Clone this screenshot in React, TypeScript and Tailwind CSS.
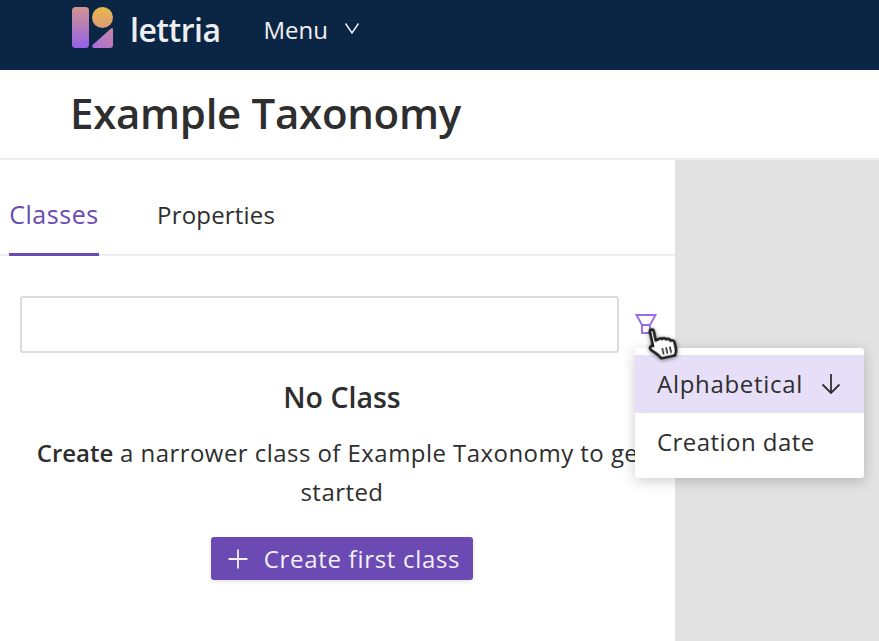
import React from "react";

const font = { fontFamily: '"Open Sans", "Noto Sans", sans-serif' };

function Logo() {
  return (
    <svg width="50" height="44" viewBox="0 0 50 44" className="mb-[4px] shrink-0">
      <defs>
        <linearGradient id="a" x1="0" y1="0" x2="0" y2="1">
          <stop offset="0" stopColor="#d2958f" />
          <stop offset="1" stopColor="#9360e8" />
        </linearGradient>
        <linearGradient id="b" x1="0" y1="0" x2="0" y2="1">
          <stop offset="0" stopColor="#e8b84a" />
          <stop offset="1" stopColor="#dc9c78" />
        </linearGradient>
        <linearGradient id="c" x1="0" y1="1" x2="1" y2="0">
          <stop offset="0" stopColor="#a66ddc" />
          <stop offset="1" stopColor="#c987a4" />
        </linearGradient>
      </defs>
      <rect x="1" y="1" width="17" height="41" rx="3.5" fill="url(#a)" />
      <circle cx="31.5" cy="11.5" r="10.5" fill="url(#b)" />
      <path d="M21.5 39 L40 22.5 Q42 21 42 23.5 V39 Q42 42 39 42 H23 Q20.5 42 21.5 39 Z" fill="url(#c)" />
    </svg>
  );
}

function Cursor() {
  return (
    <svg
      width="33"
      height="35"
      viewBox="0 0 30 32"
      className="absolute left-[646px] top-[326px] -rotate-12 drop-shadow-[0_1px_2px_rgba(0,0,0,0.45)]"
    >
      <path
        d="M6 3 C6 1 9.5 1 9.5 3 V12 L12 11.5 C13.5 10.5 15 11 15.5 12 C17 11 18.5 11.5 19 13 C20.5 12.5 22.5 13 22.5 15 C24 14.5 26 15 26 17.5 V23 C26 26 25 27 24 29 H11 L9 25.5 L3.5 19.5 C2 17.5 4 15.5 6 16.5 Z"
        fill="#fff"
        stroke="#1c1c1c"
        strokeWidth="2.4"
        strokeLinejoin="round"
      />
      <path d="M14 20 V26 M17.5 20 V26 M21 20 V26" stroke="#1c1c1c" strokeWidth="1.4" />
    </svg>
  );
}

export default function App() {
  return (
    <div className="relative flex h-[641px] w-[879px] flex-col overflow-hidden bg-white text-[#2e2e2e]" style={font}>
      <header className="flex h-[70px] shrink-0 items-center bg-[#0b2545] pb-[10px] pl-[71px]">
        <Logo />
        <span className="ml-[9px] text-[32px] font-semibold tracking-[-0.5px] text-[#eceef0]">lettria</span>
        <span className="ml-[43px] text-[24px] text-[#eef0f2]">Menu</span>
        <svg width="16" height="13" viewBox="0 0 16 13" fill="none" className="ml-[16px] mb-[3px]">
          <path d="M1.5 1.5 L8 11 L14.5 1.5" stroke="#eef0f2" strokeWidth="1.5" />
        </svg>
      </header>

      <div className="flex h-[90px] shrink-0 items-center border-b-2 border-[#eeeeee] pb-[3px] pl-[70px]">
        <h1 className="text-[42px] font-semibold leading-none tracking-[-0.3px] text-[#2e2e2e]">Example Taxonomy</h1>
      </div>

      <div className="flex min-h-0 flex-1">
        <main className="flex w-[675px] shrink-0 flex-col bg-white">
          <nav className="flex h-[96px] items-stretch border-b-2 border-[#eeeeee] pl-[9px]">
            <div className="-mb-[2px] flex w-[90px] items-center justify-center border-b-[3px] border-[#6b4bb3] pt-[17px] text-[25px] tracking-[0.55px] text-[#6b4bb3]">
              Classes
            </div>
            <div className="ml-[58px] flex items-center pt-[15px] text-[24px] tracking-[0.2px]">Properties</div>
          </nav>

          <div className="mt-[40px] flex items-center pl-[20px]">
            <input className="h-[57px] w-[599px] rounded-[3px] border-2 border-[#dcdcdc] bg-white" aria-label="Search" />
            <svg width="24" height="24" viewBox="0 0 24 24" fill="none" className="ml-[15px] mt-[1px]">
              <path d="M2.5 2 H21.5 L16 12 H8 Z" stroke="#9a6cec" strokeWidth="1.9" />
              <rect x="8" y="12" width="8" height="8" stroke="#9a6cec" strokeWidth="1.9" />
            </svg>
          </div>

          <div className="flex w-[684px] flex-col items-center">
            <h2 className="mt-[26px] text-[28.5px] font-semibold leading-[36px] text-[#2e2e2e]">No Class</h2>
            <p className="mt-[18px] w-[644px] text-center text-[24px] leading-[39px] tracking-[0.45px]">
              <span className="font-semibold tracking-normal">Create</span> a narrower class of Example Taxonomy to get started
            </p>
            <button className="mt-[26px] flex h-[43px] w-[262px] items-center justify-center gap-[16px] rounded-[3px] bg-[#6b4bb3] pl-[4px] text-[24px] tracking-[0.7px] text-[#f3f0fa] shadow-[0_2px_4px_rgba(0,0,0,0.1)]">
              <svg width="20" height="20" viewBox="0 0 20 20" fill="none">
                <path d="M10 0.5 V19.5 M0.5 10 H19.5" stroke="#f3f0fa" strokeWidth="1.8" />
              </svg>
              Create first class
            </button>
          </div>
        </main>
        <aside className="flex-1 bg-[#e2e2e2]" />
      </div>

      <div className="absolute left-[635px] top-[348px] w-[229px] overflow-hidden rounded-[3px] bg-white py-[7px] shadow-[0_3px_14px_rgba(0,0,0,0.2)]">
        <div className="flex h-[58px] items-center justify-between bg-[#e7dff8] pl-[22px] pr-[23px] text-[24px] tracking-[0.7px]">
          Alphabetical
          <svg width="20" height="22" viewBox="0 0 20 22" fill="none">
            <path d="M10 1 V20 M1.5 11.5 L10 20 L18.5 11.5" stroke="#2e2e2e" strokeWidth="1.8" />
          </svg>
        </div>
        <div className="flex h-[58px] items-center pl-[22px] text-[24px] tracking-[0.45px]">Creation date</div>
      </div>
      <Cursor />
    </div>
  );
}
